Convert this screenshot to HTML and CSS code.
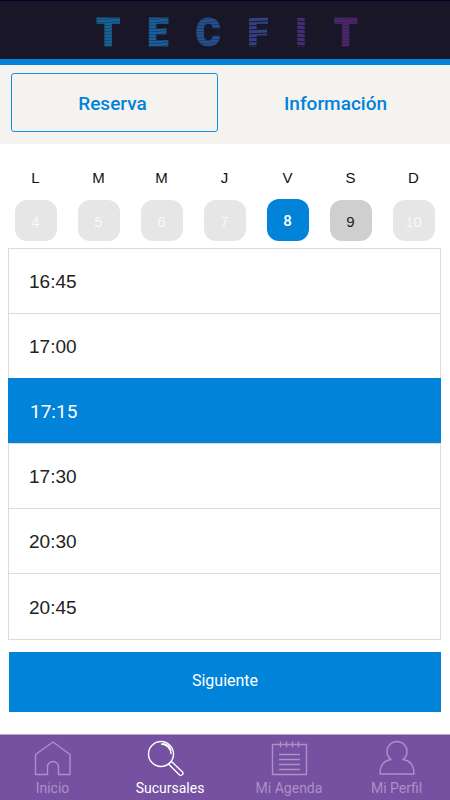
FILE: index.html
```html
<!DOCTYPE html>
<html lang="es">
<head>
<meta charset="utf-8">
<meta name="viewport" content="width=device-width, initial-scale=1">
<title>TECFIT</title>
<link rel="stylesheet" href="styles.css">
</head>
<body>
<header class="header">
  <div class="logo"><span class="l1">T</span><span class="l2">E</span><span class="l3">C</span><span class="l4 rising">F</span><span class="l5 falling">I</span><span class="l6">T</span></div>
</header>
<div class="tabs">
  <button class="tab active" type="button">Reserva</button>
  <button class="tab" type="button">Información</button>
</div>
<main class="main">
  <div class="week">
    <div class="day"><span>L</span><button type="button" disabled>4</button></div>
    <div class="day"><span>M</span><button type="button" disabled>5</button></div>
    <div class="day"><span>M</span><button type="button" disabled>6</button></div>
    <div class="day"><span>J</span><button type="button" disabled>7</button></div>
    <div class="day"><span>V</span><button type="button" class="selected">8</button></div>
    <div class="day"><span>S</span><button type="button">9</button></div>
    <div class="day"><span>D</span><button type="button" disabled>10</button></div>
  </div>
  <div class="times">
    <button type="button">16:45</button>
    <button type="button">17:00</button>
    <button type="button" class="selected">17:15</button>
    <button type="button">17:30</button>
    <button type="button">20:30</button>
    <button type="button">20:45</button>
  </div>
  <button class="next" type="button">Siguiente</button>
</main>
<nav class="nav">
  <a href="#inicio">
    <svg viewBox="0 0 38 38"><path d="M1.5 14.5 19 2l17 12.5v20H24.5V27a5.5 5.5 0 0 0-11 0v7.5h-12z"/></svg>
    <span>Inicio</span>
  </a>
  <a href="#sucursales" class="current">
    <svg viewBox="0 0 38 38"><circle cx="10" cy="14" r="12.5"/><path d="M10 4a10 10 0 0 1 10 10M12 3.5a10 10 0 0 1 8 7.5M17.5 24l3-2.500L31.500 32c1.500 1.500-1 4.500-3 3z"/></svg>
    <span>Sucursales</span>
  </a>
  <a href="#agenda">
    <svg viewBox="0 0 38 38"><path d="M2.5 4.500h34v30h-34zM10.500 1.500v6M16.500 1.500v6M22.500 1.500v6M28.500 1.500v6M9 14.500h21M9 19.500h21M9 24.500h21M9 29.500h21"/></svg>
    <span>Mi Agenda</span>
  </a>
  <a href="#perfil">
    <svg viewBox="0 0 38 38"><path d="M13 19.500a10 10 0 1 1 12 0C32 20.500 36 25 36 34H2C2 25 6 20.500 13 19.500z"/></svg>
    <span>Mi Perfil</span>
  </a>
</nav>
</body>
</html>
```
FILE: styles.css
```css
* { box-sizing: border-box; }

body {
  margin: 0;
  min-height: 100vh;
  display: flex;
  flex-direction: column;
  background: #fff;
  font-family: Roboto, sans-serif;
}

button {
  margin: 0;
  padding: 0;
  border: 0;
  background: none;
  font: inherit;
}

.header {
  padding: 10px 0;
  background: #181627;
  border-top: 1px solid #03002a;
  border-bottom: 6px solid #0083d8;
}

.logo {
  display: flex;
  justify-content: center;
  gap: 27px;
  padding-left: 4px;
  font-size: 38px;
  line-height: 44px;
  font-weight: 900;
  height: 38px;
}

.logo span {
  color: transparent;
  -webkit-text-stroke: 1px transparent;
  background-image: repeating-linear-gradient(178deg, var(--ink) 0 2px, var(--shade) 2px 3px);
  background-clip: text;
  -webkit-background-clip: text;
}

.logo .rising {
  background-image: repeating-linear-gradient(177deg, var(--ink) 0 2px, var(--shade) 3px, var(--ink) 4px);
}

.logo .falling {
  background-image: repeating-linear-gradient(186deg, var(--ink) 0 2px, var(--shade) 3px, var(--ink) 4px);
}

.l1 { --ink: #166497; --shade: #174a72; }
.l2 { --ink: #195f98; --shade: #194571; }
.l3 { --ink: #235190; --shade: #203e70; }
.l4 { --ink: #304283; --shade: #181627; }
.l5 { --ink: #422f75; --shade: #181627; }
.l6 { --ink: #4c2669; --shade: #3b2156; }

.tabs {
  display: grid;
  grid-template-columns: 1fr 1fr;
  gap: 14px;
  padding: 8px 11px 12px;
  background: #f5f3f0;
}

.tab {
  height: 59px;
  padding: 2px 4px 0 0;
  border: 1px solid transparent;
  border-radius: 3px;
  color: #0083d8;
  font-size: 19px;
  font-weight: 500;
}

.tab:last-child { padding-right: 0; }

.tab.active { border-color: #168fdb; }

.main {
  flex: 1;
  padding: 24px 9px 22px 8px;
}

.week {
  display: grid;
  grid-template-columns: repeat(7, 1fr);
  margin: 0 -4px 7px;
  font-family: "Liberation Sans", sans-serif;
  font-size: 15px;
}

.day {
  display: flex;
  flex-direction: column;
  align-items: center;
  gap: 12px;
  line-height: 20px;
  color: #111;
}

.day button {
  width: 42px;
  height: 41px;
  padding-top: 2px;
  border-radius: 12px;
  background: #cfcfcf;
  color: #222;
}

.day button:disabled {
  background: #e6e6e6;
  color: #f8f8f8;
}

.day .selected {
  height: 42px;
  margin-top: -1px;
  background: #0083d8;
  color: #fff;
  font-weight: 500;
  font-family: Roboto, sans-serif;
}

.times {
  display: flex;
  flex-direction: column;
  border: 1px solid #dcdcdc;
  font-family: "Liberation Sans", sans-serif;
  font-size: 19px;
}

.times button {
  height: 65px;
  padding: 2px 0 0 20px;
  border-bottom: 1px solid #dcdcdc;
  color: #222;
  text-align: left;
}

.times button:last-child { border-bottom: 0; }

.times .selected {
  margin: -1px -1px 0;
  height: 66px;
  padding-left: 22px;
  background: #0083d8;
  color: #fff;
  font-family: Roboto, sans-serif;
}

.next {
  display: block;
  width: 100%;
  height: 60px;
  margin-top: 12px;
  padding-bottom: 4px;
  border: solid #fff;
  border-width: 0 0 0 1px;
  background: #0083d8;
  color: #fff;
  font-size: 16px;
}

.nav {
  display: grid;
  grid-template-columns: 105fr 130fr 108fr 107fr;
  padding: 5px 0 1px;
  background: #7650a1;
  border-top: 1px solid #b8a8cb;
}

.nav a {
  display: flex;
  flex-direction: column;
  align-items: center;
  color: #ab91c7;
  font-size: 14px;
  line-height: 21px;
  text-decoration: none;
}

.nav .current { color: #fff; }

.nav svg {
  width: 38px;
  height: 38px;
  overflow: visible;
  fill: none;
  stroke: currentColor;
  stroke-width: 1.4;
  stroke-linejoin: round;
}
```
